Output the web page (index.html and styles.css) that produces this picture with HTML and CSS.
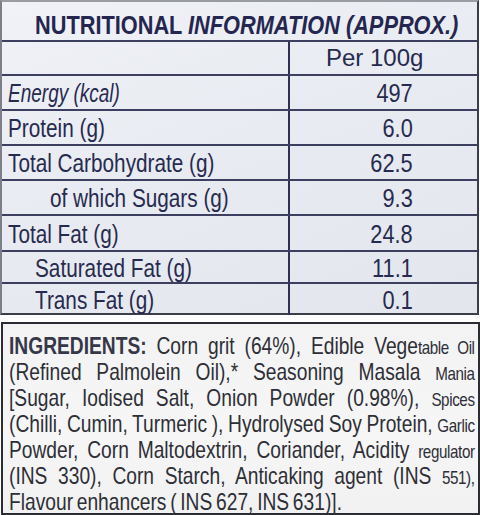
FILE: index.html
```html
<!DOCTYPE html>
<html>
<head>
<meta charset="utf-8">
<link rel="stylesheet" href="styles.css">
</head>
<body>
<section class="nutrition">
  <h1 class="title"><span class="title-text">NUTRITIONAL <i>INFORMATION (APPROX.)</i></span></h1>
  <div class="row head"><div class="label"></div><div class="value per">Per 100g</div></div>
  <div class="row r35"><div class="label"><span class="lt narrow"><i>Energy (kcal)</i></span></div><div class="value"><span class="vt">497</span></div></div>
  <div class="row r35"><div class="label"><span class="lt">Protein (g)</span></div><div class="value"><span class="vt">6.0</span></div></div>
  <div class="row r35"><div class="label"><span class="lt">Total Carbohydrate (g)</span></div><div class="value"><span class="vt">62.5</span></div></div>
  <div class="row r35"><div class="label sub1"><span class="lt">of which Sugars (g)</span></div><div class="value"><span class="vt">9.3</span></div></div>
  <div class="row r36"><div class="label"><span class="lt">Total Fat (g)</span></div><div class="value"><span class="vt">24.8</span></div></div>
  <div class="row r32"><div class="label sub2"><span class="lt">Saturated Fat (g)</span></div><div class="value"><span class="vt">11.1</span></div></div>
  <div class="row r33"><div class="label sub2"><span class="lt">Trans Fat (g)</span></div><div class="value"><span class="vt">0.1</span></div></div>
</section>
<section class="ingredients">
  <div class="ing-text">
    <div class="ing-line"><b>INGREDIENTS:</b> Corn grit (64%), Edible Vege<small>table Oil</small></div>
    <div class="ing-line">(Refined Palmolein Oil),* Seasoning Masala <small>Mania</small></div>
    <div class="ing-line">[Sugar, Iodised Salt, Onion Powder (0.98%), <small>Spices</small></div>
    <div class="ing-line tight">(Chilli, Cumin, Turmeric ), Hydrolysed Soy Protein, <small>Garlic</small></div>
    <div class="ing-line tight2">Powder, Corn Maltodextrin, Coriander, Acidity <small>regulator</small></div>
    <div class="ing-line">(INS 330), Corn Starch, Anticaking agent (INS <small>551),</small></div>
    <div class="ing-line last">Flavour enhancers ( INS 627, INS 631)].</div>
  </div>
</section>
</body>
</html>
```
FILE: styles.css
```css
html, body {
  margin: 0;
  padding: 0;
  background: #ffffff;
  overflow: hidden;
}
body {
  width: 480px;
  height: 515px;
  font-family: "Liberation Sans", Arial, sans-serif;
}
.nutrition {
  box-sizing: border-box;
  width: 479px;
  height: 315px;
  border: 2px solid #3b3d4a;
  border-top-color: #9a9ca4;
  border-left-color: #7d7f88;
  background: linear-gradient(160deg, #f0f2f7 0%, #e8ebf1 45%, #e3e6ec 100%);
  color: #272a4f;
}
.title {
  margin: 0;
  height: 38px;
  box-sizing: border-box;
  padding: 9px 0 0 33px;
  font-size: 25px;
  font-weight: bold;
  line-height: 28px;
  white-space: nowrap;
  color: #24264f;
}
.title-text {
  display: inline-block;
  transform: scaleX(0.87);
  transform-origin: left center;
}
.title i {
  font-style: italic;
}
.row {
  display: grid;
  grid-template-columns: 288px 1fr;
  border-top: 2px solid #3d3f60;
  box-sizing: border-box;
}
.head { height: 34px; }
.r35 { height: 35px; }
.r36 { height: 36px; }
.r32 { height: 32px; }
.r33 { height: 31px; }
.label {
  border-right: 2px solid #2f3154;
  display: flex;
  align-items: center;
  padding-left: 6px;
  padding-top: 2px;
  font-size: 25px;
  white-space: nowrap;
}
.label.sub1 { padding-left: 48px; }
.label.sub2 { padding-left: 33px; }
.lt {
  display: inline-block;
  transform: scaleX(0.83);
  transform-origin: left center;
}
.lt.narrow {
  transform: scaleX(0.76);
}
.value {
  display: flex;
  align-items: center;
  justify-content: flex-end;
  padding-right: 64px;
  padding-top: 2px;
  font-size: 25px;
  white-space: nowrap;
}
.vt {
  display: inline-block;
  transform: scaleX(0.87);
  transform-origin: right center;
}
.value.per {
  justify-content: flex-start;
  padding-left: 36px;
  padding-right: 0;
  font-size: 24px;
  align-items: flex-start;
  padding-top: 2px;
}
.ingredients {
  box-sizing: border-box;
  width: 479px;
  height: 193px;
  margin-top: 7px;
  margin-left: 1px;
  border: 2px solid #2c2c34;
  background: linear-gradient(180deg, #f3f3f4 0%, #f6f6f7 60%, #f1f1f2 100%);
  color: #2e2f36;
  overflow: hidden;
  padding: 10px 0 0 6px;
}
.ing-text {
  width: 582px;
  transform: scaleX(0.8);
  transform-origin: 0 0;
  font-size: 24px;
  line-height: 24px;
}
.ing-line {
  text-align: justify;
  text-align-last: justify;
  white-space: nowrap;
}
.ing-line.tight {
  word-spacing: -3px;
}
.ing-line.tight2 {
  word-spacing: -1px;
}
.ing-line b {
  color: #363848;
}
.ing-line small {
  font-size: 19px;
  letter-spacing: -0.5px;
}
.ing-line.last {
  text-align-last: left;
  word-spacing: -2px;
}
```
